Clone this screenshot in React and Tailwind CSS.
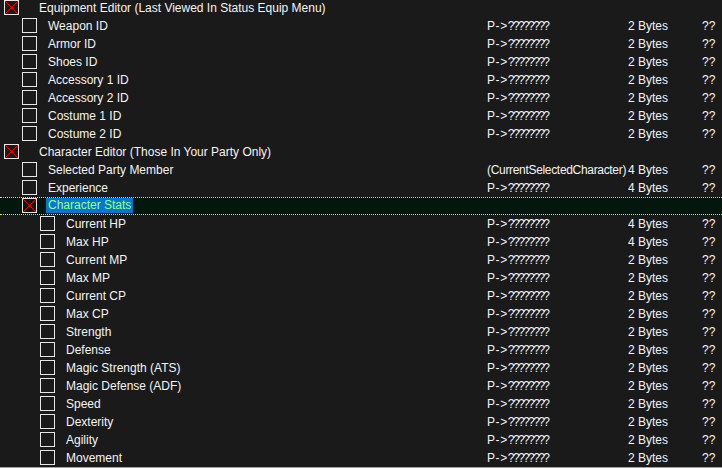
import React from "react";

const rows = [
  { l: 0, g: true, x: true, d: "Equipment Editor (Last Viewed In Status Equip Menu)" },
  { l: 1, d: "Weapon ID", a: "P", t: "2 Bytes", v: "??" },
  { l: 1, d: "Armor ID", a: "P", t: "2 Bytes", v: "??" },
  { l: 1, d: "Shoes ID", a: "P", t: "2 Bytes", v: "??" },
  { l: 1, d: "Accessory 1 ID", a: "P", t: "2 Bytes", v: "??" },
  { l: 1, d: "Accessory 2 ID", a: "P", t: "2 Bytes", v: "??" },
  { l: 1, d: "Costume 1 ID", a: "P", t: "2 Bytes", v: "??" },
  { l: 1, d: "Costume 2 ID", a: "P", t: "2 Bytes", v: "??" },
  { l: 0, g: true, x: true, d: "Character Editor (Those In Your Party Only)" },
  { l: 1, d: "Selected Party Member", a: "(CurrentSelectedCharacter)", t: "4 Bytes", v: "??" },
  { l: 1, d: "Experience", a: "P", t: "4 Bytes", v: "??" },
  { l: 1, g: true, x: true, sel: true, d: "Character Stats" },
  { l: 2, d: "Current HP", a: "P", t: "4 Bytes", v: "??" },
  { l: 2, d: "Max HP", a: "P", t: "4 Bytes", v: "??" },
  { l: 2, d: "Current MP", a: "P", t: "2 Bytes", v: "??" },
  { l: 2, d: "Max MP", a: "P", t: "2 Bytes", v: "??" },
  { l: 2, d: "Current CP", a: "P", t: "2 Bytes", v: "??" },
  { l: 2, d: "Max CP", a: "P", t: "2 Bytes", v: "??" },
  { l: 2, d: "Strength", a: "P", t: "2 Bytes", v: "??" },
  { l: 2, d: "Defense", a: "P", t: "2 Bytes", v: "??" },
  { l: 2, d: "Magic Strength (ATS)", a: "P", t: "2 Bytes", v: "??" },
  { l: 2, d: "Magic Defense (ADF)", a: "P", t: "2 Bytes", v: "??" },
  { l: 2, d: "Speed", a: "P", t: "2 Bytes", v: "??" },
  { l: 2, d: "Dexterity", a: "P", t: "2 Bytes", v: "??" },
  { l: 2, d: "Agility", a: "P", t: "2 Bytes", v: "??" },
  { l: 2, d: "Movement", a: "P", t: "2 Bytes", v: "??" },
];

const boxMargin = ["ml-[4px]", "ml-[22px]", "ml-[40px]"];

function Box({ x }) {
  return (
    <div className="w-[15px] h-[15px] border border-[#e6e6e6] shrink-0 relative">
      {x && (
        <svg className="absolute inset-0" width="13" height="13" viewBox="0 0 13 13">
          <line x1="0" y1="0" x2="13" y2="13" stroke="#ff0000" strokeWidth="1" />
          <line x1="13" y1="0" x2="0" y2="13" stroke="#ff0000" strokeWidth="1" />
        </svg>
      )}
    </div>
  );
}

function Addr({ a }) {
  if (a === "P") {
    return (
      <span className="ml-[487px] w-[141px] whitespace-nowrap">
        <span className="tracking-[0.6px]">P-&gt;</span>
        <span className="tracking-[-1.6px]">????????</span>
      </span>
    );
  }
  return (
    <span className="ml-[487px] w-[141px] whitespace-nowrap tracking-[-0.32px]">{a}</span>
  );
}

function Row({ r }) {
  const descGap = r.g ? (r.l === 0 ? "ml-[20px]" : "ml-[9px]") : "ml-[11px]";
  return (
    <div
      className={
        "h-[18px] flex items-start shrink-0 relative " +
        (r.sel ? "bg-[#04170f] border-y border-dotted border-[#b8ff1a]" : "")
      }
    >
      <div className={"flex items-start " + (r.sel ? "mt-0" : "mt-px")}>
        <div className={boxMargin[r.l]}>
          <Box x={r.x} />
        </div>
      </div>
      <div className={"flex-1 flex items-center h-[17px] " + (r.sel ? "-mt-px" : "")}>
        <div className={descGap + " w-[440px] shrink-0 flex"}>
          {r.sel ? (
            <span className="bg-[#0078d7] text-[#a6ff5e] px-[2px] leading-[15px]">{r.d}</span>
          ) : (
            <span className="whitespace-nowrap">{r.d}</span>
          )}
        </div>
      </div>
      {r.a && (
        <div className="absolute left-0 top-0 h-[17px] w-full flex items-center pointer-events-none">
          <Addr a={r.a} />
          <span className="w-[74px] whitespace-nowrap">{r.t}</span>
          <span className="whitespace-nowrap">{r.v}</span>
        </div>
      )}
    </div>
  );
}

export default function App() {
  return (
    <div
      className="w-[722px] h-[468px] bg-[#1a1a1a] text-[#f4f4f4] overflow-hidden flex flex-col text-[12px]"
      style={{ fontFamily: '"Liberation Sans", Arial, sans-serif' }}
    >
      <div className="flex flex-col -mt-px flex-1">
        {rows.map((r, i) => (
          <Row key={i} r={r} />
        ))}
      </div>
      <div className="h-px bg-[#a0a0a0] shrink-0" />
    </div>
  );
}
